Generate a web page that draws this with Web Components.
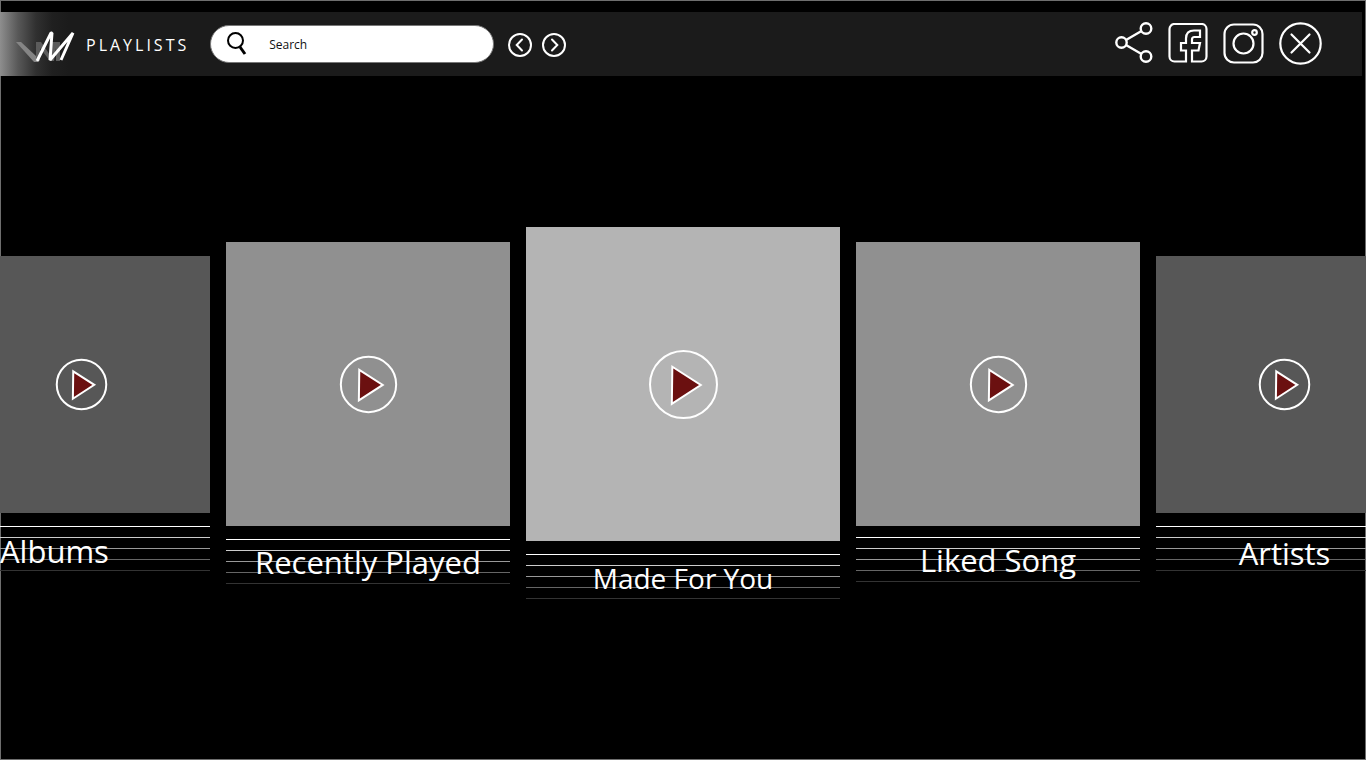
<!DOCTYPE html>
<html lang="en">
<head>
<meta charset="utf-8">
<meta name="viewport" content="width=device-width, initial-scale=1">
<title>Playlists</title>
<style>
  body { margin: 0; background: #fff; font-family: "Open Sans", "Noto Sans", sans-serif; }
</style>
</head>
<body>
<music-app>
  <top-bar slot="header">Playlists</top-bar>
  <playlist-tile class="far" label-align="start">Albums</playlist-tile>
  <playlist-tile class="near">Recently Played</playlist-tile>
  <playlist-tile class="main">Made For You</playlist-tile>
  <playlist-tile class="near raised">Liked Song</playlist-tile>
  <playlist-tile class="far low">Artists</playlist-tile>
</music-app>

<template id="music-app">
  <style>
    :host { display: flex; flex-direction: column; box-sizing: border-box; min-height: calc(100vh - 8px);
      padding-top: 12px; background: #000; color: #fff; box-shadow: inset 0 0 0 1px #6e6e6e; overflow: hidden; }
    main { flex: 1; display: flex; align-items: center; justify-content: center; gap: 16px; }
  </style>
  <slot name="header"></slot>
  <main><slot></slot></main>
</template>

<template id="top-bar">
  <style>
    :host { display: block; margin-right: 4px; }
    header { display: flex; align-items: center; height: 64px; box-sizing: border-box; padding: 0 40px 0 16px;
      background: linear-gradient(90deg, #8e8e8e 0, #585858 18px, #303030 36px, #202020 52px, #1b1b1b 68px); }
    h1 { margin: 0 21px 0 10px; padding-top: 2px; font-size: 16px; line-height: 20px; font-weight: 400; letter-spacing: 3px; text-transform: uppercase; }
    svg { display: block; fill: none; stroke: #fff; }
    nav { display: flex; align-items: center; gap: 10px; margin-left: 14px; padding-top: 2px; }
    .actions { gap: 15px; margin-left: auto; padding-top: 0; }
    button, a { display: block; padding: 0; border: 0; background: none; color: inherit; cursor: pointer; }
  </style>
  <header>
    <svg width="60" height="38" viewBox="0 -6 60 38" aria-hidden="true">
      <path d="M0 11h5L20 25l2 6h-4z" fill="#858585" stroke="none"/>
      <path d="M20 11h5l9 13V11h10v19h-4V17l-2 13h-4L24 17v13h-4zM38 12l-1 12" fill="#5c5c5c" stroke="none"/>
      <path d="M21 30 35 2h1L34 29 57 2 45 29" stroke-width="3" stroke-linejoin="bevel"/>
    </svg>
    <h1><slot></slot></h1>
    <search-box></search-box>
    <nav aria-label="History">
      <button aria-label="Back"><svg width="24" height="24" viewBox="0 0 24 24" stroke-width="2"><circle cx="12" cy="12" r="11"/><path d="M14 6.500 8.700 12l5.300 5.500" stroke-linecap="round"/></svg></button>
      <button aria-label="Forward"><svg width="24" height="24" viewBox="0 0 24 24" stroke-width="2"><circle cx="12" cy="12" r="11"/><path d="m10 6.500 5.300 5.500-5.300 5.500" stroke-linecap="round"/></svg></button>
    </nav>
    <nav class="actions" aria-label="Share and close">
      <button aria-label="Share"><svg width="38" height="44" viewBox="0 0 38 44" stroke-width="2.400"><circle cx="6.500" cy="20.500" r="5.200"/><circle cx="31" cy="6.500" r="5.300"/><circle cx="31" cy="34.500" r="5.300"/><path d="m11 18 15.500-9M11 23l15.500 9"/></svg></button>
      <a href="#facebook" aria-label="Facebook"><svg width="40" height="42" viewBox="0 1 40 42" stroke-width="2.200"><path d="M18 39.500H6.500a5 5 0 0 1-5-5V7a5 5 0 0 1 5-5h27a5 5 0 0 1 5 5v27.500a5 5 0 0 1-5 5H24V28.500h6.500l1.500-7.500h-8v-3.500q0-2.500 2.500-2.500H32V8.500h-6q-8 0-8 8V21h-5v7.500h5z"/></svg></a>
      <a href="#instagram" aria-label="Instagram"><svg width="41" height="42" viewBox="0 1 41 42" stroke-width="2.200"><rect x="1.500" y="2.500" width="38" height="38" rx="9.500"/><circle cx="20.500" cy="21.500" r="10"/><circle cx="31.500" cy="10.500" r="2.300"/></svg></a>
      <button aria-label="Close"><svg width="43" height="44" viewBox="0 0 43 44" stroke-width="2.200"><circle cx="21.500" cy="21.500" r="20.200"/><path d="m12.500 12.500 18 18m0-18-18 18" stroke-linecap="round"/></svg></button>
    </nav>
  </header>
</template>

<template id="search-box">
  <style>
    :host { display: block; flex: 0 1 284px; }
    label { display: flex; align-items: center; gap: 22px; height: 38px; box-sizing: border-box; padding: 0 16px;
      border: 1px solid #777; border-radius: 19px; background: #fff; }
    svg { flex: none; fill: none; stroke: #000; }
    input { flex: 1; min-width: 0; padding: 2px 0 0; border: 0; outline: 0; background: none; color: #111;
      font: 12px/16px "Open Sans", "Noto Sans", sans-serif; }
    input::placeholder { color: #111; opacity: 1; }
  </style>
  <label>
    <svg width="20" height="24" viewBox="0 0 20 24" aria-hidden="true"><circle cx="8.500" cy="8.500" r="7.500" stroke-width="2"/><path d="m13 15 5 7" stroke-width="3"/></svg>
    <input type="text" placeholder="Search" aria-label="Search">
  </label>
</template>

<template id="playlist-tile">
  <style>
    :host { --size: 257px; --disc: 51px; --cover: #575757; --staff-top: 13px; --text-top: 18px; --text: 31px;
      display: block; flex: none; width: var(--size); }
    :host(.near) { --size: 284px; --disc: 57px; --cover: #909090; --text-top: 16px; }
    :host(.main) { --size: 314px; --disc: 69px; --cover: #b4b4b4; --text-top: 17px; --text: 28px; }
    :host(.raised) { --staff-top: 11px; --text-top: 14px; }
    :host(.low) { --text-top: 20px; }
    .cover { display: grid; place-items: center; height: var(--size); background: var(--cover); }
    button { width: var(--disc); height: var(--disc); padding: 0; border: 0; background: none; cursor: pointer; }
    svg { display: block; width: 100%; height: 100%; overflow: visible; }
    svg * { stroke: #fff; stroke-width: 2px; vector-effect: non-scaling-stroke; }
    .caption { display: grid; height: 68px; }
    .staff, h2 { grid-area: 1 / 1; }
    .staff { display: grid; gap: 10px; align-content: start; padding-top: var(--staff-top); }
    .staff i { height: 1px; background: #fff; }
    .staff i:nth-child(2) { background: #ccc; }
    .staff i:nth-child(3) { background: #999; }
    .staff i:nth-child(4) { background: #666; }
    .staff i:nth-child(5) { background: #333; }
    h2 { z-index: 1; margin: 0; padding-top: var(--text-top); font-size: var(--text); line-height: 40px;
      font-weight: 400; text-align: center; white-space: nowrap; }
    :host([label-align="start"]) h2 { text-align: left; padding-left: 47px; }
  </style>
  <div class="cover">
    <button aria-label="Play"><svg viewBox="0 0 68 68"><circle cx="34" cy="34" r="33" fill="none"/><path d="M23 16.500 51 34.500 22.500 53z" fill="#6b1010"/></svg></button>
  </div>
  <div class="caption">
    <div class="staff" aria-hidden="true"><i></i><i></i><i></i><i></i><i></i></div>
    <h2><slot></slot></h2>
  </div>
</template>

<script>
  class TemplateElement extends HTMLElement {
    constructor() {
      super();
      const template = document.getElementById(this.localName);
      this.attachShadow({ mode: "open" }).append(template.content.cloneNode(true));
    }
  }
  customElements.define("music-app", class extends TemplateElement {});
  customElements.define("top-bar", class extends TemplateElement {});
  customElements.define("search-box", class extends TemplateElement {});
  customElements.define("playlist-tile", class extends TemplateElement {});
</script>
</body>
</html>
